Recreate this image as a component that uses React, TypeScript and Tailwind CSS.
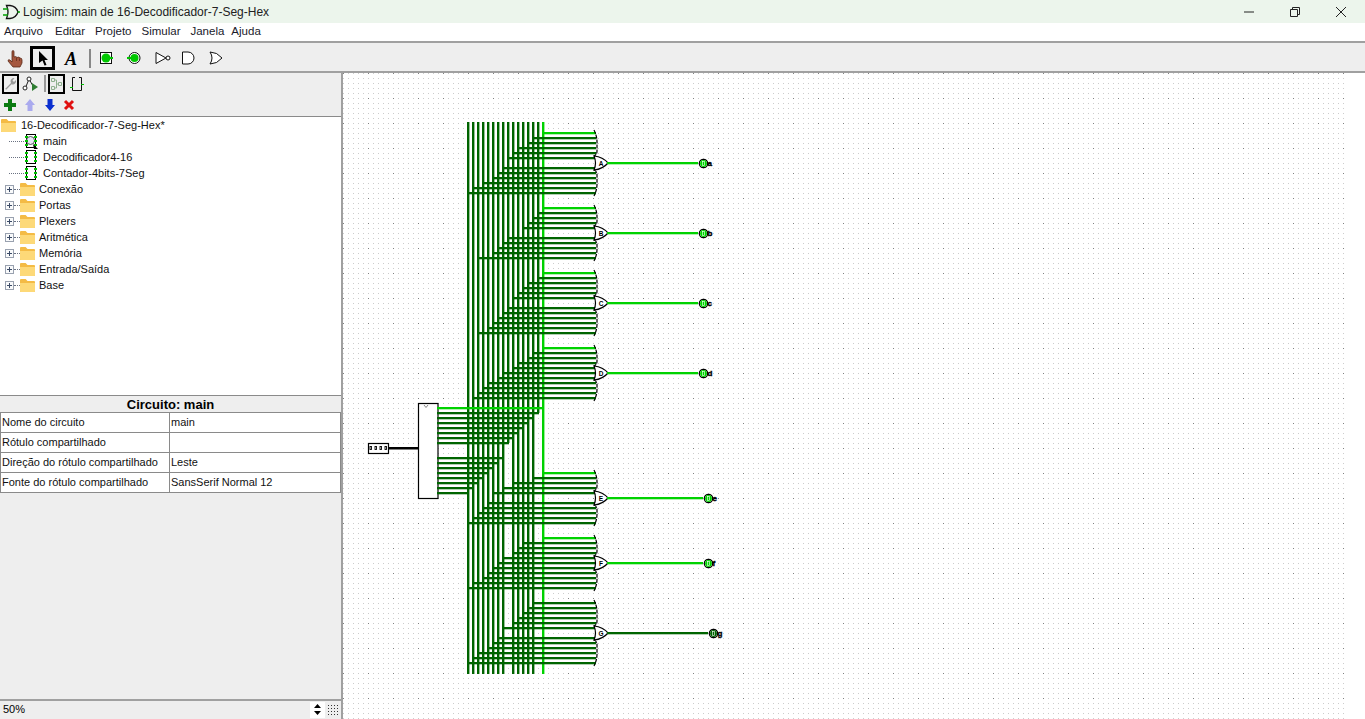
const DARK = "#006400"
const BRIGHT = "#00d200"

// decoder outputs, index = hex digit
const digitX = (d: number) => 543 - d * 5
const outY = [408, 413, 418, 423, 428, 433, 438, 443, 458, 463, 468, 473, 478, 483, 488, 493]
const digitEnd = (d: number) => (d === 1 ? 413 : d === 7 ? 443 : 674)

const gates = [
  { name: "A", label: "a", y: 163, pinX: 704, on: [0, 2, 3, 5, 6, 7, 8, 9, 10, 12, 14, 15], lit: true },
  { name: "B", label: "b", y: 233, pinX: 704, on: [0, 1, 2, 3, 4, 7, 8, 9, 10, 13], lit: true },
  { name: "C", label: "c", y: 303, pinX: 704, on: [0, 1, 3, 4, 5, 6, 7, 8, 9, 10, 11, 13], lit: true },
  { name: "D", label: "d", y: 373, pinX: 704, on: [0, 2, 3, 5, 6, 8, 9, 11, 12, 13, 14], lit: true },
  { name: "E", label: "e", y: 498, pinX: 709, on: [0, 2, 6, 8, 10, 11, 12, 13, 14, 15], lit: true },
  { name: "F", label: "f", y: 563, pinX: 709, on: [0, 4, 5, 6, 8, 9, 10, 11, 12, 14, 15], lit: true },
  { name: "G", label: "g", y: 633, pinX: 714, on: [2, 3, 4, 5, 6, 8, 9, 10, 11, 13, 14, 15], lit: false },
]

const menus = [
  { label: "Arquivo", cls: "pr-0.5" },
  { label: "Editar", cls: "" },
  { label: "Projeto", cls: "" },
  { label: "Simular", cls: "" },
  { label: "Janela", cls: "-mr-[3px]" },
  { label: "Ajuda", cls: "" },
]

function inputYs(gateY: number, count: number) {
  const half = Math.floor(count / 2)
  const ys: number[] = []
  for (let i = 0; i < half; i++) ys.push(gateY - (half - i) * 5)
  if (count % 2 === 1) ys.push(gateY)
  for (let i = 0; i < half; i++) ys.push(gateY + (i + 1) * 5)
  return ys
}

function Gate({ g }: { g: (typeof gates)[number] }) {
  const ys = inputYs(g.y, g.on.length)
  const top = ys[0]
  const bottom = ys[ys.length - 1]
  const color = g.lit ? BRIGHT : DARK
  return (
    <g>
      {ys.map((y, i) => (
        <rect
          key={y}
          x={digitX(g.on[i]) - 1}
          y={y - 1}
          width={597 - digitX(g.on[i])}
          height={2.3}
          fill={g.on[i] === 0 ? BRIGHT : DARK}
        />
      ))}
      <path
        d={`M594 ${top - 3} Q597 ${top + 3} 597 ${top + 9} L597 ${g.y - 12} Q597 ${g.y - 8} 594 ${g.y - 7} M594 ${g.y + 7} Q597 ${g.y + 8} 597 ${g.y + 12} L597 ${bottom - 9} Q597 ${bottom - 3} 594 ${bottom + 3}`}
        fill="none"
        stroke="#000"
        strokeWidth={1.2}
        strokeDasharray="4 1"
      />
      <path
        d={`M594 ${g.y - 7} Q603 ${g.y - 6} 608 ${g.y} Q603 ${g.y + 6} 594 ${g.y + 7} Q597 ${g.y} 594 ${g.y - 7} Z`}
        fill="#fff"
        stroke="#000"
        strokeWidth={1.2}
      />
      <text x={601} y={g.y + 2.5} fontSize={6.5} fontFamily="Liberation Sans, sans-serif" fontWeight={700} fill="#000" textAnchor="middle">
        {g.name}
      </text>
      <rect x={607} y={g.y - 1} width={g.pinX - 613} height={2.3} fill={color} />
      <circle cx={g.pinX - 0.5} cy={g.y + 0.5} r={4.2} fill="#fff" stroke="#000" strokeWidth={1.2} />
      <circle cx={g.pinX - 0.5} cy={g.y + 0.5} r={3.4} fill={color} />
      <rect x={g.pinX - 1.5} y={g.y - 1.5} width={2} height={4} fill="none" stroke="#fff" strokeWidth={0.6} />
      <text x={g.pinX + 3.5} y={g.y + 3} fontSize={8} fontFamily="Liberation Sans, sans-serif" fontWeight={700} fill="#000" stroke="#000" strokeWidth={0.4}>
        {g.label}
      </text>
    </g>
  )
}

function Circuit() {
  const digits = Array.from({ length: 16 }, (_, d) => d).reverse()
  return (
    <svg className="block h-[646px] w-[1022px]" viewBox="343 73 1022 646">
      <defs>
        <pattern id="fine" x={3} y={3} width={5} height={5} patternUnits="userSpaceOnUse">
          <rect width={1} height={1} fill="#cccccc" />
        </pattern>
        <pattern id="coarse" x={18} y={23} width={25} height={25} patternUnits="userSpaceOnUse">
          <rect width={1} height={1} fill="#808080" />
        </pattern>
      </defs>
      <rect x={343} y={73} width={1001} height={646} fill="url(#fine)" />
      <rect x={343} y={73} width={1001} height={646} fill="url(#coarse)" />

      {digits.map((d) => (
        <rect key={d} x={digitX(d) - 1} y={122} width={2.4} height={digitEnd(d) - 122} fill={d === 0 ? BRIGHT : DARK} />
      ))}

      {gates.map((g) => (
        <Gate key={g.name} g={g} />
      ))}

      <rect x={418.5} y={403.5} width={19.5} height={95} fill="#fff" stroke="#000" strokeWidth={1.2} />
      <path d="M424 405 L426 407.5 L428 405" fill="none" stroke="#888" strokeWidth={1} />
      {digits.map((d) => (
        <rect key={d} x={437} y={outY[d] - 1} width={digitX(d) - 436} height={2.3} fill={d === 0 ? BRIGHT : DARK} />
      ))}
      <rect x={388} y={447} width={30} height={2.5} fill="#000" />
      <rect x={368.5} y={443.5} width={20} height={10} fill="#fff" stroke="#000" strokeWidth={1.2} />
      {[370, 375, 380, 385].map((x) => (
        <rect key={x} x={x} y={446.5} width={1.5} height={3} fill="#fff" stroke="#000" strokeWidth={0.9} />
      ))}
    </svg>
  )
}

function Folder() {
  return (
    <svg width={15} height={14} viewBox="0 0 16 14" preserveAspectRatio="none" className="shrink-0">
      <path d="M0 2 Q0 1 1 1 H6 L8 3 H15 Q16 3 16 4 V13 Q16 14 15 14 H1 Q0 14 0 13 Z" fill="#f4bb45" />
      <path d="M0 5 H16 V13 Q16 14 15 14 H1 Q0 14 0 13 Z" fill="#fdd978" />
    </svg>
  )
}

function CircuitIcon({ magnifier }: { magnifier?: boolean }) {
  return (
    <svg width={14} height={16} viewBox="0 0 14 16" className="shrink-0">
      <rect x={2.5} y={1.5} width={9} height={13} fill="#fff" stroke="#000" />
      {magnifier && <circle cx={6.5} cy={7.5} r={4} fill="#e6e8f6" stroke="#333" strokeWidth={0.8} />}
      {[3, 7, 11].map((y) => (
        <g key={y}>
          <rect x={1} y={y} width={3} height={2} fill="#00c000" />
          <rect x={10} y={y} width={3} height={2} fill="#00c000" />
        </g>
      ))}
      {magnifier && <path d="M9 11 L14 16 H10 Z" fill="#000" />}
    </svg>
  )
}

function SubRow({ label, magnifier }: { label: string; magnifier?: boolean }) {
  return (
    <div className="flex h-4 items-center">
      <div className="ml-[9px] h-0 w-[15px] shrink-0 border-t border-dotted border-gray-500" />
      <CircuitIcon magnifier={magnifier} />
      <span className="ml-[5px]">{label}</span>
    </div>
  )
}

function LibRow({ label }: { label: string }) {
  return (
    <div className="flex h-4 items-center">
      <div className="ml-[5px] flex h-[9px] w-[9px] shrink-0 items-center justify-center border border-gray-400 bg-gray-50">
        <svg width={5} height={5} viewBox="0 0 5 5" shapeRendering="crispEdges">
          <path d="M0 2h5v1H0zM2 0h1v5H2z" fill="#3a4a66" />
        </svg>
      </div>
      <div className="h-0 w-1.5 shrink-0 border-t border-dotted border-gray-500" />
      <Folder />
      <span className="ml-1">{label}</span>
    </div>
  )
}

const attrs = [
  ["Nome do circuito", "main"],
  ["Rótulo compartilhado", ""],
  ["Direção do rótulo compartilhado", "Leste"],
  ["Fonte do rótulo compartilhado", "SansSerif Normal 12"],
]

export default function App() {
  return (
    <div className="flex h-[719px] w-[1365px] flex-col overflow-hidden bg-white font-['Liberation_Sans',sans-serif] text-[11px] text-black">
      {/* Title bar */}
      <div className="flex h-[23px] shrink-0 items-center bg-[#ecf5ec]">
        <svg width={18} height={16} viewBox="0 0 18 16" className="ml-[2px] shrink-0">
          <path d="M4.5 1.5 H8 Q14 2 16 8 Q14 14 8 14.5 H4.5 Q7.5 8 4.5 1.5 Z" fill="#ecf5ec" stroke="#111" strokeWidth={1.3} />
          <path d="M1 5 H6 M1 11 H6" stroke="#00a000" strokeWidth={1.5} />
          <path d="M15.5 8 H18" stroke="#00a000" strokeWidth={1.5} />
        </svg>
        <span className="ml-[3px] text-[12px] text-[#222]">Logisim: main de 16-Decodificador-7-Seg-Hex</span>
        <div className="ml-auto flex items-center">
          <svg width={12} height={12} viewBox="0 0 12 12" className="mr-[34px]">
            <path d="M1 6 H11" stroke="#222" strokeWidth={1} />
          </svg>
          <svg width={12} height={12} viewBox="0 0 12 12" className="mr-[34px]">
            <path d="M1.5 3.5 H8.5 V10.5 H1.5 Z M3.5 3 V1.5 H10.5 V8.5 H9" fill="none" stroke="#222" strokeWidth={1} />
          </svg>
          <svg width={12} height={12} viewBox="0 0 12 12" className="mr-[18px]">
            <path d="M1 1 L11 11 M11 1 L1 11" stroke="#222" strokeWidth={1} />
          </svg>
        </div>
      </div>

      {/* Menu */}
      <div className="flex h-5 shrink-0 items-center gap-[10px] border-b-2 border-b-[#a0a0a0] pl-1 text-[11.5px] text-[#1a1a2a]">
        {menus.map((m) => (
          <span key={m.label} className={m.cls}>
            {m.label}
          </span>
        ))}
      </div>

      {/* Main toolbar */}
      <div className="flex h-[30px] shrink-0 items-center border-b-2 border-b-[#a0a0a0] bg-[#eeeeee] pt-[2px]">
        <svg width={16} height={18} viewBox="0 0 16 18" className="ml-[7px] mt-[2px] shrink-0">
          <path
            d="M5 2 Q5 0.5 6 0.5 Q7 0.5 7 2 V7 Q9 6 10 7.5 Q12 6.5 13 8 Q15 8 15 10 V13 L13 17 H6 L1 11 Q1 9 3 10 L5 12 Z"
            fill="#a5573f"
            stroke="#5a2a18"
            strokeWidth={0.8}
          />
          <path d="M9.5 8 V11 M12.5 8.5 V11" stroke="#5a2a18" strokeWidth={0.7} />
        </svg>
        <div className="ml-[7px] flex h-6 w-[25px] shrink-0 items-center justify-center border-[3px] border-black">
          <svg width={12} height={16} viewBox="0 0 12 16">
            <path d="M2 1 L11 10 H7.5 L9.5 15 L7.5 15.5 L5.5 10.5 L2 13 Z" fill="#000" />
          </svg>
        </div>
        <span className="ml-2 mt-[2px] w-4 shrink-0 text-center font-['Liberation_Serif',serif] text-[18px] font-bold italic leading-none">A</span>
        <div className="ml-[10px] h-[19px] w-0.5 shrink-0 bg-[#888]" />
        <svg width={14} height={14} viewBox="0 0 14 14" className="ml-2 shrink-0">
          <rect x={1.5} y={1.5} width={11} height={11} fill="#fff" stroke="#111" />
          <circle cx={7} cy={7} r={4.5} fill="#00c800" />
          <rect x={11} y={6} width={3} height={2} fill="#00c800" />
        </svg>
        <svg width={14} height={14} viewBox="0 0 14 14" className="ml-[14px] shrink-0">
          <circle cx={7.5} cy={7} r={5.5} fill="#fff" stroke="#111" />
          <circle cx={7.5} cy={7} r={4} fill="#00c800" />
          <rect x={0} y={6} width={4} height={2} fill="#00c800" />
        </svg>
        <svg width={16} height={14} viewBox="0 0 16 14" className="ml-[14px] shrink-0">
          <path d="M1 1.5 L11 7 L1 12.5 Z" fill="#fff" stroke="#111" />
          <circle cx={13} cy={7} r={2} fill="#fff" stroke="#111" />
        </svg>
        <svg width={14} height={14} viewBox="0 0 14 14" className="ml-[10px] shrink-0">
          <path d="M1.5 1 H7 A6 6 0 0 1 7 13 H1.5 Z" fill="#fff" stroke="#111" />
        </svg>
        <svg width={14} height={14} viewBox="0 0 14 14" className="ml-[14px] shrink-0">
          <path d="M1 1 Q8 1 13 7 Q8 13 1 13 Q5 7 1 1 Z" fill="#fff" stroke="#111" />
        </svg>
      </div>

      <div className="flex min-h-0 flex-1">
        {/* Left panel */}
        <div className="flex w-[343px] shrink-0 flex-col border-r-2 border-r-[#a0a0a0] bg-[#eeeeee]">
          <div className="flex h-[21px] shrink-0 items-center">
            <div className="ml-[2px] flex h-5 w-[17px] shrink-0 items-center justify-center border-2 border-black">
              <svg width={13} height={13} viewBox="0 0 13 13">
                <path d="M1 12 L7 6 Q5.5 2.5 9 1 Q10 1 10.5 1.2 L8.5 3.5 L10 5 L12 3 Q12.5 6 10 7.2 Q8.5 7.6 7.5 7.2 L2.5 12.5 Z" fill="#999" />
              </svg>
            </div>
            <svg width={17} height={16} viewBox="0 0 17 16" className="ml-[3px] shrink-0">
              <path d="M3 13 L7 3 L11 10" fill="none" stroke="#222" strokeWidth={1} />
              <circle cx={3} cy={12} r={2} fill="#fff" stroke="#222" />
              <circle cx={7} cy={3} r={2} fill="#fff" stroke="#222" />
              <path d="M10 7 L16 11 L10 15 Z" fill="#2e7d32" />
            </svg>
            <div className="ml-[5px] h-[17px] w-0.5 shrink-0 bg-[#999]" />
            <div className="ml-[2px] flex h-5 w-[17px] shrink-0 items-center justify-center border-2 border-black">
              <svg width={13} height={14} viewBox="0 0 13 14">
                <path d="M1.5 1.5h3v3h-3zM1.5 9.5h3v3h-3zM8.5 5.5h3v3h-3zM4.5 3h2v8h-2M6.5 7h2" fill="none" stroke="#8fb08f" />
              </svg>
            </div>
            <svg width={14} height={16} viewBox="0 0 14 16" className="ml-[5px] shrink-0">
              <path d="M2.5 1.5 H5 M9 1.5 H11.5 V14.5 H2.5 V1.5" fill="none" stroke="#111" />
              <path d="M0 11h3v1H0zM11 8h3v1h-3z" fill="#00c000" />
            </svg>
          </div>
          <div className="flex h-[22px] shrink-0 items-center pb-px">
            <svg width={14} height={14} viewBox="0 0 14 14" className="ml-[3px] shrink-0">
              <path d="M5 1h4v4h4v4H9v4H5V9H1V5h4z" fill="#0a7a10" />
            </svg>
            <svg width={12} height={14} viewBox="0 0 12 14" className="ml-[7px] shrink-0">
              <path d="M6 1 L11 7 H8.5 V13 H3.5 V7 H1 Z" fill="#aaaaee" />
            </svg>
            <svg width={12} height={14} viewBox="0 0 12 14" className="ml-2 shrink-0">
              <path d="M6 13 L11 7 H8.5 V1 H3.5 V7 H1 Z" fill="#0a2fd0" />
            </svg>
            <svg width={12} height={12} viewBox="0 0 12 12" className="ml-[7px] shrink-0">
              <path d="M2 2 L10 10 M10 2 L2 10" stroke="#e01010" strokeWidth={3} />
            </svg>
          </div>

          {/* Project tree */}
          <div className="h-[280px] shrink-0 border-y border-[#8a8a8a] bg-white text-[#111]">
            <div className="flex h-4 items-center gap-1 pl-[1px]">
              <Folder />
              <span className="ml-px">16-Decodificador-7-Seg-Hex*</span>
            </div>
            <SubRow label="main" magnifier />
            <SubRow label="Decodificador4-16" />
            <SubRow label="Contador-4bits-7Seg" />
            {["Conexão", "Portas", "Plexers", "Aritmética", "Memória", "Entrada/Saída", "Base"].map((l) => (
              <LibRow key={l} label={l} />
            ))}
          </div>

          {/* Attributes */}
          <div className="flex h-[16px] shrink-0 items-center justify-center pt-px text-[13px] font-bold">Circuito: main</div>
          <div className="grid w-[341px] shrink-0 grid-cols-[170px_171px] border-t border-[#8a8a8a] text-[#111]">
            {attrs.map(([k, v]) => (
              <div key={k} className="col-span-2 grid h-5 grid-cols-subgrid border-b border-[#8a8a8a] bg-white">
                <div className="flex items-center border-x border-[#8a8a8a] pl-px">{k}</div>
                <div className="flex items-center border-r border-[#8a8a8a] pl-px">{v}</div>
              </div>
            ))}
          </div>

          {/* Zoom */}
          <div className="mt-auto flex h-[20px] shrink-0 items-center border-t-2 border-t-[#a0a0a0] pb-px">
            <span className="ml-[3px]">50%</span>
            <div className="ml-auto flex h-[16px] w-[15px] flex-col items-center justify-center gap-[3px] bg-white">
              <svg width={7} height={4} viewBox="0 0 7 4"><path d="M0 4 L3.5 0 L7 4 Z" fill="#000" /></svg>
              <svg width={7} height={4} viewBox="0 0 7 4"><path d="M0 0 L3.5 4 L7 0 Z" fill="#000" /></svg>
            </div>
            <svg width={12} height={12} viewBox="0 0 12 12" className="mx-[2px] shrink-0">
              {[1, 4, 7, 10].map((y) =>
                [1, 4, 7, 10].map((x) => <rect key={`${x}-${y}`} x={x} y={y} width={1} height={1} fill="#333" />),
              )}
            </svg>
          </div>
        </div>

        {/* Canvas */}
        <div className="min-w-0 flex-1 overflow-hidden">
          <Circuit />
        </div>
      </div>
    </div>
  )
}
